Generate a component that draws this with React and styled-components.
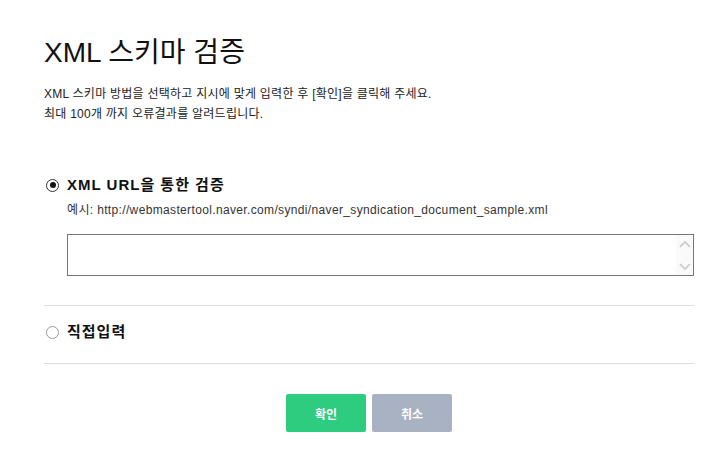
import styled, { createGlobalStyle } from "styled-components";

const Global = createGlobalStyle`
  body {
    margin: 0;
    background: #fff;
    font-family: "Liberation Sans", "Noto Sans CJK KR", sans-serif;
    color: #111;
  }
`;

export default function App() {
  return (
    <>
      <Global />
      <Page>
        <Title>XML 스키마 검증</Title>
        <Desc>
          XML 스키마 방법을 선택하고 지시에 맞게 입력한 후 [확인]을 클릭해 주세요.
          <br />
          최대 100개 까지 오류결과를 알려드립니다.
        </Desc>

        <Section $first>
          <Option>
            <Radio $checked />
            <Label>XML URL을 통한 검증</Label>
          </Option>
          <Example>
            예시: http://webmastertool.naver.com/syndi/naver_syndication_document_sample.xml
          </Example>
          <InputBox>
            <Area />
            <ScrollCol>
              <svg width="12" height="8" viewBox="0 0 12 8">
                <path d="M1 7 L6 2 L11 7" fill="none" stroke="#c8c8c8" strokeWidth="1.6" />
              </svg>
              <svg width="12" height="8" viewBox="0 0 12 8">
                <path d="M1 1 L6 6 L11 1" fill="none" stroke="#c8c8c8" strokeWidth="1.6" />
              </svg>
            </ScrollCol>
          </InputBox>
        </Section>

        <Section>
          <Option>
            <Radio />
            <Label>직접입력</Label>
          </Option>
        </Section>

        <Buttons>
          <Button $kind="ok">확인</Button>
          <Button $kind="cancel">취소</Button>
        </Buttons>
      </Page>
    </>
  );
}

const Page = styled.div`
  padding: 36px 17px 0 44px;
`;

const Title = styled.h1`
  margin: 0;
  font-size: 28px;
  line-height: 34px;
  font-weight: 400;
  color: #111;
`;

const Desc = styled.p`
  margin: 14px 0 0;
  font-size: 12px;
  line-height: 20px;
  color: #222;
  letter-spacing: 0.25px;
`;

const Section = styled.div`
  padding: ${(p) => (p.$first ? "52px 0 29px" : "17px 0 22px")};
  border-bottom: 1px solid #dcdcdc;
`;

const Option = styled.label`
  display: flex;
  align-items: center;
  gap: 8px;
  padding-left: 2px;
`;

const Radio = styled.span`
  width: 11px;
  height: 11px;
  border-radius: 50%;
  border: 1px solid ${(p) => (p.$checked ? "#333" : "#9a9a9a")};
  display: flex;
  align-items: center;
  justify-content: center;
  flex-shrink: 0;
  &::after {
    content: "";
    display: ${(p) => (p.$checked ? "block" : "none")};
    width: 6px;
    height: 6px;
    border-radius: 50%;
    background: #111;
  }
`;

const Label = styled.span`
  font-size: 15px;
  font-weight: 700;
  line-height: 18px;
  letter-spacing: 1px;
  color: #111;
`;

const Example = styled.div`
  margin: 8px 0 0 23px;
  font-size: 12px;
  line-height: 16px;
  letter-spacing: 0.35px;
  color: #333;
`;

const InputBox = styled.div`
  display: flex;
  margin: 16px 0 0 23px;
  height: 40px;
  border: 1px solid #767676;
`;

const Area = styled.textarea`
  flex: 1;
  border: none;
  outline: none;
  resize: none;
  padding: 4px 6px;
  font: inherit;
  font-size: 12px;
`;

const ScrollCol = styled.div`
  width: 17px;
  background: #fafafa;
  display: flex;
  flex-direction: column;
  align-items: center;
  justify-content: space-between;
  padding: 5px 0 4px;
`;

const Buttons = styled.div`
  display: flex;
  justify-content: center;
  gap: 6px;
  margin-top: 30px;
`;

const Button = styled.button`
  width: 80px;
  height: 38px;
  border: none;
  border-radius: 2px;
  font-family: "Liberation Sans", "Noto Sans CJK KR", sans-serif;
  font-size: 12px;
  font-weight: 700;
  color: #fff;
  background: ${(p) => (p.$kind === "ok" ? "#2ecc7e" : "#a9b2c3")};
`;
